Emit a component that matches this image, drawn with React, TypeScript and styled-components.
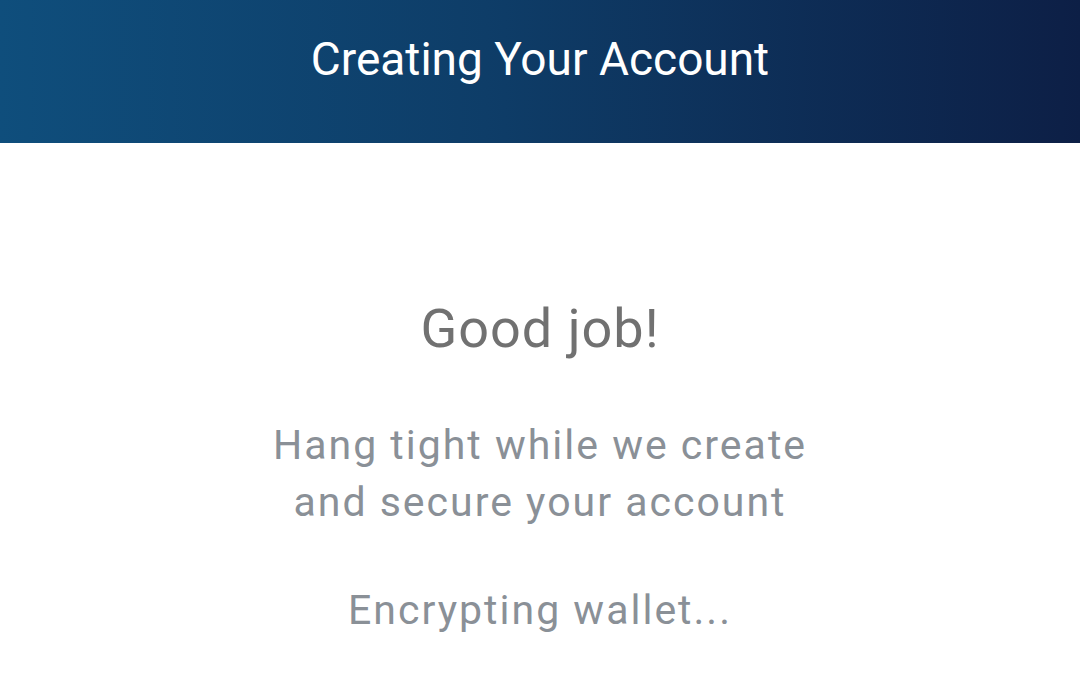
import React from 'react';
import styled, { createGlobalStyle } from 'styled-components';

const GlobalStyle = createGlobalStyle`
  html, body {
    margin: 0;
    padding: 0;
    background: #ffffff;
    font-family: Roboto, "Noto Sans", "Liberation Sans", sans-serif;
  }
`;

const Page = styled.div`
  width: 100%;
  min-height: 693px;
  display: flex;
  flex-direction: column;
`;

const Header = styled.header`
  height: 143px;
  display: flex;
  align-items: center;
  justify-content: center;
  background: linear-gradient(90deg, #0f4e7c 0%, #0e3d68 45%, #0d1f46 100%);
`;

const Title = styled.h1`
  margin: 0 0 26px;
  color: #ffffff;
  font-size: 46px;
  font-weight: 400;
  line-height: 52px;
`;

const Content = styled.main`
  display: flex;
  flex-direction: column;
  align-items: center;
  padding-top: 155px;
  text-align: center;
`;

const Heading = styled.h2`
  margin: 0;
  color: #717171;
  font-size: 54px;
  font-weight: 400;
  line-height: 62px;
  letter-spacing: 1px;
`;

const Message = styled.p<{ $gap: number }>`
  margin: ${(p) => p.$gap}px 0 0;
  color: #8a9097;
  font-size: 41px;
  line-height: 57px;
  letter-spacing: 2px;
`;

const App: React.FC = () => {
  return (
    <Page>
      <GlobalStyle />
      <Header>
        <Title>Creating Your Account</Title>
      </Header>
      <Content>
        <Heading>Good job!</Heading>
        <Message $gap={57}>
          Hang tight while we create
          <br />
          and secure your account
        </Message>
        <Message $gap={51}>Encrypting wallet...</Message>
      </Content>
    </Page>
  );
};

export default App;
